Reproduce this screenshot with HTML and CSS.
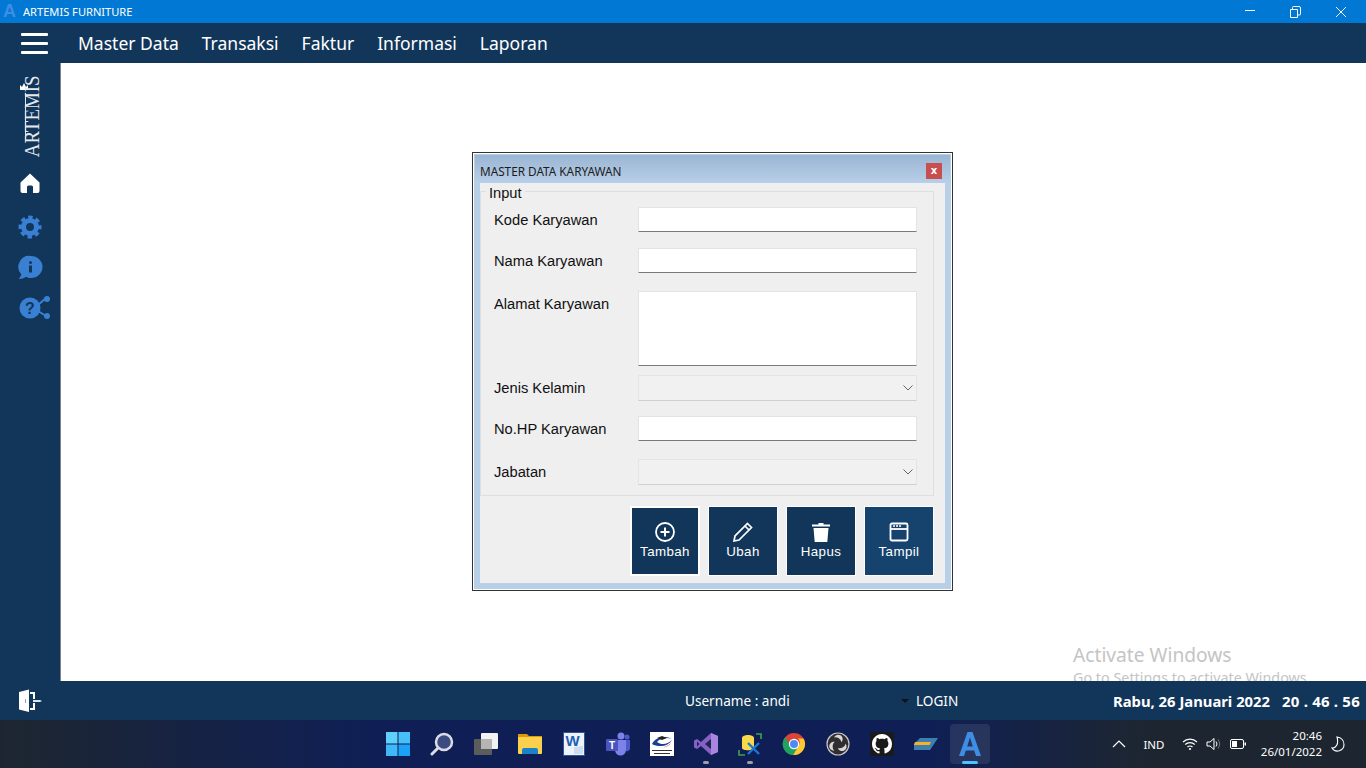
FILE: index.html
```html
<!DOCTYPE html>
<html lang="en">
<head>
    <meta charset="UTF-8">
    <meta name="viewport" content="width=device-width, initial-scale=1.0">
    <title>Artemis Furniture</title>
    <link rel="stylesheet" href="styles.css">
</head>
<body>
<div class="app">

    <!-- window title bar -->
    <header class="titlebar">
        <div class="app-title">
            <span class="app-logo">A</span>
            <span>ARTEMIS FURNITURE</span>
        </div>
        <div class="win-controls">
            <svg width="12" height="12" viewBox="0 0 12 12"><path d="M2 4.500h10" stroke="#fff" fill="none"/></svg>
            <svg width="12" height="12" viewBox="0 0 12 12"><path d="M1.500 3.500h7v8h-7zM3.500 3V1.500a1 1 0 0 1 1-1h5.500a1.500 1.500 0 0 1 1.500 1.500v6a1 1 0 0 1-1 1H9" stroke="#fff" fill="none"/></svg>
            <svg width="12" height="12" viewBox="0 0 12 12"><path d="M1 1l10 10M11 1L1 11" stroke="#fff" fill="none"/></svg>
        </div>
    </header>

    <!-- main menu -->
    <nav class="menubar">
        <div class="hamburger"><span></span><span></span><span></span></div>
        <a>Master Data</a>
        <a>Transaksi</a>
        <a>Faktur</a>
        <a>Informasi</a>
        <a>Laporan</a>
    </nav>

    <div class="workspace">
        <aside class="sidebar">
            <div class="brand">
                <svg class="crown" width="10" height="9" viewBox="0 0 10 9"><path d="M1 8V3l2 2 2-4 2 4 2-2v5z" fill="#fff"/></svg>
                <span class="brand-text">ARTEMIS</span>
            </div>
            <svg class="side-icon home" width="22" height="22" viewBox="0 0 22 22"><path d="M11 1.500L1.500 10.500v8.500a2 2 0 0 0 2 2h4.500v-6a1.500 1.500 0 0 1 1.500-1.500h3a1.500 1.500 0 0 1 1.500 1.500v6h4.500a2 2 0 0 0 2-2v-8.500z" fill="#fff"/></svg>
            <svg class="side-icon gear" width="24" height="24" viewBox="0 0 24 24"><circle cx="12" cy="12" r="6.500" fill="none" stroke="#3a80d2" stroke-width="5"/><circle cx="12" cy="12" r="9.500" fill="none" stroke="#3a80d2" stroke-width="4" stroke-dasharray="4.200 3.260" stroke-dashoffset="2"/></svg>
            <svg class="side-icon info" width="25" height="25" viewBox="0 0 25 25"><path d="M13 1a11.500 11 0 0 1 0 22c-2 0-3.500-.4-5-1.200C6 23.300 3.500 24 .5 24c1.500-1.200 2.500-2.800 2.800-4.700A11 11 0 0 1 13 1z" fill="#3a80d2"/><circle cx="12.500" cy="7.500" r="1.500" fill="#12365a"/><path d="M11 10.500h3v7h-3z" fill="#12365a"/></svg>
            <svg class="side-icon help" width="32" height="26" viewBox="0 0 32 26"><circle cx="11" cy="13" r="10.500" fill="#3a80d2"/><path d="M19 10L27 3M19 16l8 5" stroke="#3a80d2" stroke-width="2"/><circle cx="28" cy="4" r="3" fill="#3a80d2"/><circle cx="28" cy="21" r="3" fill="#3a80d2"/><text x="11" y="18.500" class="help-mark">?</text></svg>
        </aside>

        <main class="desktop">
            <section class="dialog">
                <div class="dialog-title">
                    <span>MASTER DATA KARYAWAN</span>
                    <button class="dialog-close" type="button">x</button>
                </div>
                <div class="dialog-body">
                    <div class="groupbox">
                        <span class="group-label">Input</span>
                        <div class="form-row row-kode">
                            <label>Kode Karyawan</label>
                            <input class="field" type="text">
                        </div>
                        <div class="form-row row-nama">
                            <label>Nama Karyawan</label>
                            <input class="field" type="text">
                        </div>
                        <div class="form-row row-alamat">
                            <label>Alamat Karyawan</label>
                            <div class="field field-area"></div>
                        </div>
                        <div class="form-row row-jenis">
                            <label>Jenis Kelamin</label>
                            <div class="combo"><svg width="10" height="6" viewBox="0 0 10 6"><path d="M.5.500L5 5 9.500.500" fill="none" stroke="#666"/></svg></div>
                        </div>
                        <div class="form-row row-hp">
                            <label>No.HP Karyawan</label>
                            <input class="field" type="text">
                        </div>
                        <div class="form-row row-jabatan">
                            <label>Jabatan</label>
                            <div class="combo"><svg width="10" height="6" viewBox="0 0 10 6"><path d="M.5.500L5 5 9.500.500" fill="none" stroke="#666"/></svg></div>
                        </div>
                    </div>
                    <div class="actions">
                        <button class="action focused" type="button">
                            <svg width="22" height="22" viewBox="0 0 22 22"><circle cx="11" cy="11" r="9" fill="none" stroke="#fff" stroke-width="1.800"/><path d="M11 6.500v9M6.500 11h9" stroke="#fff" stroke-width="2"/></svg>
                            Tambah
                        </button>
                        <button class="action" type="button">
                            <svg width="22" height="22" viewBox="0 0 22 22"><path d="M15.500 2.500l4 4L7 19l-5 1 1-5zM13 5l4 4" fill="none" stroke="#fff" stroke-width="1.700"/></svg>
                            Ubah
                        </button>
                        <button class="action" type="button">
                            <svg width="22" height="22" viewBox="0 0 22 22"><path d="M2 3.500h6.500V2h5v1.500H20v2H2zM3.500 7h15l-1.200 14H4.700z" fill="#fff"/></svg>
                            Hapus
                        </button>
                        <button class="action hover" type="button">
                            <svg width="22" height="22" viewBox="0 0 22 22"><rect x="2.500" y="2.500" width="17" height="17" rx="1.500" fill="none" stroke="#fff" stroke-width="1.800"/><path d="M3 8h16" stroke="#fff" stroke-width="1.800"/><path d="M5 5h2M8 5h2M11 5h2" stroke="#fff" stroke-width="1.600"/></svg>
                            Tampil
                        </button>
                    </div>
                </div>
            </section>

            <div class="watermark">
                <div class="wm-big">Activate Windows</div>
                <div class="wm-small">Go to Settings to activate Windows.</div>
            </div>
        </main>
    </div>

    <footer class="statusbar">
        <svg class="exit-icon" width="24" height="24" viewBox="0 0 24 24"><path d="M1 3l10-2.500V23L1 20.500zM12 3h5v7h-2V5h-3zM12 19h3v-5h2v7h-5z" fill="#fff"/><path d="M15 11h7l2 1-2 1h-7z" fill="#dbe6f2"/><path d="M7 10h1v4H7z" fill="#8fa3b8"/></svg>
        <span class="username">Username : andi</span>
        <span class="login"><i class="caret"></i>LOGIN</span>
        <span class="date">Rabu, 26 Januari 2022</span>
        <span class="clock">20 . 46 . 56</span>
    </footer>

    <!-- windows taskbar -->
    <div class="taskbar">
        <div class="task-icons">
            <div class="task-item">
                <svg width="24" height="24" viewBox="0 0 24 24"><rect width="11.500" height="11.500" fill="#5fd0fb"/><rect x="12.500" width="11.500" height="11.500" fill="#45c0f8"/><rect y="12.500" width="11.500" height="11.500" fill="#3fb8f9"/><rect x="12.500" y="12.500" width="11.500" height="11.500" fill="#1ba2f5"/></svg>
            </div>
            <div class="task-item">
                <svg width="24" height="24" viewBox="0 0 24 24"><circle cx="14" cy="10" r="8" fill="#3b4a80" stroke="#d9dde4" stroke-width="2.500"/><path d="M8 16l-6 6" stroke="#d9dde4" stroke-width="3" stroke-linecap="round"/></svg>
            </div>
            <div class="task-item">
                <svg width="24" height="24" viewBox="0 0 24 24"><rect x="7" y="1" width="17" height="16" rx="1" fill="#f2f2f2"/><rect y="7" width="18" height="16" rx="1" fill="#5c5c5c"/><rect x="7" y="7" width="11" height="10" fill="#b5b5b5"/></svg>
            </div>
            <div class="task-item">
                <svg width="24" height="24" viewBox="0 0 24 24"><path d="M0 2h9l2 2h13v5H0z" fill="#d99a0b"/><rect y="5" width="24" height="17" rx="1" fill="#fbd04c"/><path d="M4 18a2 2 0 0 1 2-2h12a2 2 0 0 1 2 2v4H4z" fill="#1a82c9"/></svg>
            </div>
            <div class="task-item">
                <svg width="24" height="24" viewBox="0 0 24 24"><rect x="1" width="22" height="24" fill="#2a5699"/><rect x="2" y="1" width="20" height="22" fill="#eef3fa"/><path d="M12 15l9-1v8h-9z" fill="#cfdcee"/><text x="10.500" y="14" class="word-mark">W</text></svg>
            </div>
            <div class="task-item">
                <svg width="24" height="24" viewBox="0 0 24 24"><circle cx="15" cy="4" r="3.500" fill="#7b83eb"/><circle cx="21" cy="5" r="2.500" fill="#5059c9"/><path d="M9 8h11v10a5.500 5.500 0 0 1-11 0z" fill="#7b83eb"/><path d="M20 8h4v8a3 3 0 0 1-4 3z" fill="#5059c9"/><rect y="7" width="12" height="12" rx="1" fill="#4b53bc"/><text x="6" y="16.500" class="teams-mark">T</text></svg>
            </div>
            <div class="task-item">
                <svg width="24" height="24" viewBox="0 0 24 24"><rect width="24" height="24" fill="#fff"/><path d="M2 12c3-7 14-9 20-5-5-2-12-1-15 3 4 3 10 3 15-2-3 6-13 8-20 4z" fill="#1c3f94"/><path d="M4 13c5 4 12 3 17-2-3 5-12 6-17 2z" fill="#d22"/><path d="M7 6l5-2 5 2-5 2z" fill="#222"/><path d="M2 18h20v1H2zM4 21h16v1H4z" fill="#333"/></svg>
            </div>
            <div class="task-item running">
                <svg width="24" height="24" viewBox="0 0 24 24"><path d="M17 1l7 3v16l-7 3-10-9-4 3-3-1.500v-7L3 7l4 3z" fill="#8661c5"/><path d="M3 9.500v5l2.500-2.500z" fill="#1e2350"/><path d="M17 1l7 3v16l-7 3z" fill="#a886e0"/><path d="M17 7v10l-6-5z" fill="#1e2350"/></svg>
            </div>
            <div class="task-item running">
                <svg width="24" height="24" viewBox="0 0 24 24"><path d="M4 6c0-4 12-4 12 0v10c0 3-12 3-12 0z" fill="#f7d84a"/><path d="M18 2h5v5M1 18v5h6" fill="none" stroke="#3fa34d" stroke-width="1.600"/><path d="M10 22l11-11M21 22L10 11" stroke="#1b76d2" stroke-width="2.400"/></svg>
            </div>
            <div class="task-item">
                <svg width="24" height="24" viewBox="0 0 24 24"><circle cx="12" cy="12" r="11" fill="#db4437"/><path d="M21.500 6.500A11 11 0 0 1 11 23l5-8.500a5.500 5.500 0 0 0 0-8z" fill="#fcc934"/><path d="M3.200 5l5 9a5.500 5.500 0 0 0 8 .5L11 23A11 11 0 0 1 3.200 5z" fill="#1ea362"/><circle cx="12" cy="12" r="5.200" fill="#fff"/><circle cx="12" cy="12" r="4" fill="#4a8af4"/></svg>
            </div>
            <div class="task-item">
                <svg width="24" height="24" viewBox="0 0 24 24"><circle cx="12" cy="12" r="11" fill="#302e31" stroke="#c8c8c8" stroke-width="1.200"/><g fill="#d8d8d8"><path d="M8 5.500A4.500 4.500 0 1 1 15.500 10.200 6 6 0 0 0 8 5.500z"/><path d="M8 5.500A4.500 4.500 0 1 1 15.500 10.200 6 6 0 0 0 8 5.500z" transform="rotate(120 12 12)"/><path d="M8 5.500A4.500 4.500 0 1 1 15.500 10.200 6 6 0 0 0 8 5.500z" transform="rotate(240 12 12)"/></g></svg>
            </div>
            <div class="task-item">
                <svg width="24" height="24" viewBox="0 0 24 24"><rect width="24" height="24" fill="#1b1a1a"/><g transform="translate(2 2) scale(1.250)"><path d="M8 0C3.580 0 0 3.580 0 8c0 3.540 2.290 6.530 5.470 7.590.4.070.55-.17.55-.38 0-.19-.01-.82-.01-1.490-2.010.37-2.530-.49-2.690-.94-.09-.23-.48-.94-.82-1.130-.28-.15-.68-.52-.01-.53.63-.01 1.080.58 1.230.82.72 1.210 1.870.87 2.330.66.07-.52.28-.87.51-1.070-1.780-.2-3.640-.89-3.640-3.950 0-.87.31-1.590.82-2.150-.08-.2-.36-1.020.08-2.120 0 0 .67-.21 2.200.82.64-.18 1.320-.27 2-.27.68 0 1.360.09 2 .27 1.530-1.040 2.200-.82 2.200-.82.44 1.100.16 1.920.08 2.120.51.56.82 1.270.82 2.150 0 3.070-1.870 3.750-3.650 3.950.29.25.54.73.54 1.480 0 1.070-.01 1.930-.01 2.200 0 .21.15.46.55.38A8.013 8.013 0 0016 8c0-4.420-3.580-8-8-8z" fill="#fff"/></g></svg>
            </div>
            <div class="task-item">
                <svg width="24" height="24" viewBox="0 0 24 24"><path d="M6 6h18l-8 12H0v-6z" fill="#3d7fb0"/><path d="M1 10h16l-1.500 3H0z" fill="#f5b324"/></svg>
            </div>
            <div class="task-item active">
                <svg width="24" height="26" viewBox="0 0 24 26"><path d="M9.500 1h5L23 25h-5l-1.800-5.500H7.800L6 25H1zM9.200 15.500h5.600L12 6.500z" fill="#3d8ee4"/></svg>
            </div>
        </div>
        <div class="tray">
            <svg class="tray-chevron" width="14" height="8" viewBox="0 0 14 8"><path d="M1 7l6-6 6 6" fill="none" stroke="#fff" stroke-width="1.200"/></svg>
            <span class="tray-lang">IND</span>
            <svg width="16" height="14" viewBox="0 0 16 14"><path d="M1 5a10 10 0 0 1 14 0M3.200 7.500a7 7 0 0 1 9.600 0M5.500 10a3.500 3.500 0 0 1 5 0" fill="none" stroke="#fff" stroke-width="1.100"/><circle cx="8" cy="12" r="1.100" fill="#fff"/></svg>
            <svg width="16" height="14" viewBox="0 0 16 14"><path d="M1 5h3l4-3.500v11L4 9H1zM10 4.500a4 4 0 0 1 0 5" fill="none" stroke="#fff"/><path d="M12 2.500a7 7 0 0 1 0 9" fill="none" stroke="#777"/></svg>
            <svg width="16" height="10" viewBox="0 0 16 10"><rect x=".5" y=".5" width="13" height="9" rx="1.500" fill="none" stroke="#fff"/><rect x="2" y="2" width="5" height="6" fill="#fff"/><rect x="14.500" y="3.500" width="1.500" height="3" fill="#fff"/></svg>
            <div class="tray-clock"><span>20:46</span><span>26/01/2022</span></div>
            <svg width="14" height="16" viewBox="0 0 14 16"><path d="M6 1c4 .5 7 3.500 7 7.500a6.500 6.500 0 0 1-12 3.500c4 .5 7-4 5-11z" fill="none" stroke="#fff" stroke-width="1.100"/></svg>
        </div>
    </div>
</div>
</body>
</html>
```
FILE: styles.css
```css
* { box-sizing: border-box; }
html, body { margin: 0; height: 100%; overflow: hidden; }
body { font-family: "Noto Sans", sans-serif; background-color: #fff; }
svg { display: block; flex: none; }

.app { display: flex; flex-direction: column; width: 1366px; height: 768px; }

/* title bar */
.titlebar { display: flex; justify-content: space-between; align-items: center; height: 23px; background-color: #0078d4; color: #fff; font-size: 11.100px; }
.app-title { display: flex; align-items: center; }
.app-logo { width: 23px; padding-left: 3px; font: bold 18px "Liberation Sans", sans-serif; color: #3d8ee4; }
.win-controls { display: flex; gap: 34px; padding-right: 19px; }

/* menu */
.menubar { display: flex; align-items: center; gap: 23px; height: 40px; background-color: #12365a; color: #fff; font-size: 17.500px; }
.hamburger { display: flex; flex-direction: column; gap: 6px; width: 27px; margin-left: 21px; margin-right: 7px; }
.hamburger span { height: 3px; background-color: #fff; border-radius: 1px; }

/* middle */
.workspace { display: flex; flex: 1; min-height: 0; }
.sidebar { display: flex; flex: none; flex-direction: column; align-items: flex-start; width: 61px; background-color: #12365a; border-right: 1px solid #7d8288; }
.brand { position: relative; width: 40px; height: 80px; margin-top: 12px; }
.brand::after { content: ""; position: absolute; left: 25px; top: 18px; width: 1px; height: 48px; background-color: #dfe5ec; }
.crown { position: absolute; left: 19px; top: 7px; }
.brand-text { position: absolute; top: -3px; left: 25px; writing-mode: vertical-rl; transform: rotate(180deg) scaleY(.92); font: 20.500px/15px "Liberation Serif", serif; color: #e4e9ef; }
.side-icon { margin-left: 19px; }
.side-icon.home { margin-top: 17px; }
.side-icon.gear { margin-top: 21px; margin-left: 18px; }
.side-icon.info { margin-top: 16px; margin-left: 18px; }
.side-icon.help { margin-top: 15px; }
.help-mark { font: bold 16px "Liberation Sans", sans-serif; fill: #12365a; text-anchor: middle; }

.desktop { position: relative; display: flex; flex: 1; justify-content: center; align-items: flex-start; padding-top: 89px; background-color: #fff; }

/* dialog */
.dialog { width: 481px; height: 439px; border: 1px solid #333; box-shadow: inset 0 0 0 1px #fff; padding: 2px; background-color: #b8cfe8; display: flex; flex-direction: column; margin-left: -2px; }
.dialog-title { display: flex; justify-content: space-between; align-items: center; height: 28px; padding: 4px 8px 0 5px; background: linear-gradient(#9ab5d3, #b8cfe8); font-size: 11.750px; color: #1c1c1c; }
.dialog-close { width: 16px; height: 16px; padding: 0; border: none; background-color: #c94f4f; color: #fff; font: bold 10px/14px "DejaVu Sans", sans-serif; }
.dialog-body { flex: 1; margin: 0 5px 5px 5px; background-color: #efefef; padding: 8px 11px 0 0; font-family: "Liberation Sans", sans-serif; }

.groupbox { position: relative; height: 305px; border: 1px solid #dfdfdf; padding: 0 16px 0 13px; }
.group-label { position: absolute; top: -7px; left: 5px; padding: 0 3px; background-color: #efefef; font-size: 14.670px; line-height: 16px; color: #111; }

.form-row { display: flex; align-items: flex-start; color: #111; font-size: 14.700px; }
.form-row label { width: 144px; padding-top: 5px; }
.row-kode { margin-top: 15px; }
.row-nama { margin-top: 16px; }
.row-alamat { margin-top: 18px; }
.row-jenis { margin-top: 9px; }
.row-hp { margin-top: 15px; }
.row-jabatan { margin-top: 18px; }

.field { display: block; width: 279px; height: 25px; padding: 0; background-color: #fff; border: 1px solid #e3e3e3; border-bottom: 1px solid #7a7a7a; border-radius: 1px; outline: none; }
.field-area { height: 75px; }
.combo { display: flex; justify-content: flex-end; align-items: center; width: 279px; height: 26px; padding-right: 3px; background-color: #f1f1f1; border: 1px solid #e4e4e4; border-bottom-color: #cfcfcf; border-radius: 1px; }

/* buttons */
.actions { display: flex; justify-content: flex-end; gap: 8px; margin-top: 10px; }
.action { display: flex; flex-direction: column; align-items: center; gap: 1px; width: 70px; height: 70px; padding: 14px 0 0; background-color: #12365a; border: 1px solid #fff; color: #fff; font: 13.330px "Liberation Sans", sans-serif; letter-spacing: .4px; }
.action.focused { border-width: 2px; padding-top: 13px; }
.action.hover { background-color: #15436e; }

.watermark { position: absolute; left: 1012px; top: 579px; color: #c4c4c4; }
.wm-big { font-size: 19.200px; line-height: 26px; }
.wm-small { font-size: 14.350px; line-height: 20px; white-space: nowrap; }

/* status */
.statusbar { position: relative; display: flex; align-items: center; flex: none; height: 39px; background-color: #12365a; color: #fff; font-size: 13.600px; }
.exit-icon { margin-left: 18px; }
.username { margin-left: 643px; width: 216px; }
.login { display: flex; align-items: center; width: 212px; }
.caret { width: 0; height: 0; margin-right: 7px; border: 4px solid transparent; border-top-color: #111; border-bottom: none; }
.date { font-weight: bold; font-size: 14.800px; width: 169px; }
.clock { font-weight: bold; font-size: 15px; letter-spacing: .2px; }

/* taskbar */
.taskbar { display: flex; flex: none; align-items: center; height: 48px; background: linear-gradient(90deg, #1d2630 0, #0f1f55 27%, #0f1f55 68%, #1d2630 84%); color: #fff; }
.task-icons { display: flex; margin-left: 376px; width: 717px; }
.task-item { position: relative; display: flex; justify-content: center; align-items: center; width: 44px; height: 40px; }
.task-item.active { background-color: rgba(255, 255, 255, .09); width: 40px; margin-left: 2px; border-radius: 4px; }
.task-item.active::after { content: ""; position: absolute; left: 12px; bottom: 0; width: 16px; height: 3px; border-radius: 2px; background-color: #4cc2ff; }
.task-item.running::after { content: ""; position: absolute; left: 19px; bottom: 0; width: 6px; height: 3px; border-radius: 2px; background-color: #9a9fab; }
.word-mark { font: bold 15px "Liberation Sans", sans-serif; fill: #1f5fb5; text-anchor: middle; }
.teams-mark { font: bold 10px "Liberation Sans", sans-serif; fill: #fff; text-anchor: middle; }
.tray { display: flex; align-items: center; gap: 8px; font-size: 11.500px; }
.tray-chevron { margin-left: 19px; }
.tray-lang { width: 40px; text-align: center; }
.tray-clock { display: flex; flex-direction: column; align-items: flex-end; margin-left: 4px; margin-right: 1px; line-height: 16px; width: 64px; }
```
